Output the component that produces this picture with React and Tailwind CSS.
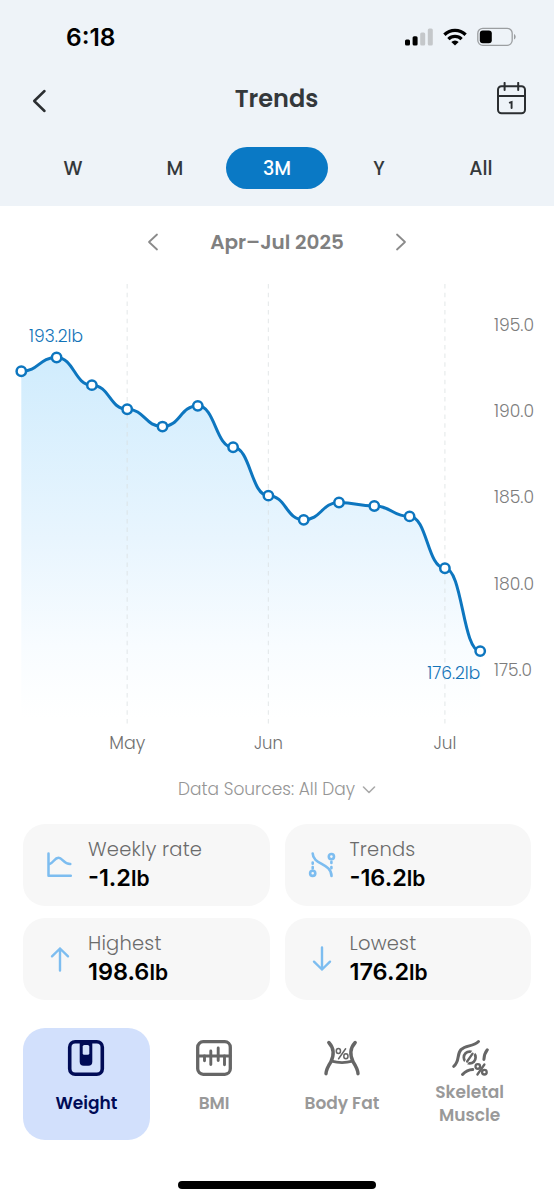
import { useState } from "react";

const RANGES = ["W", "M", "3M", "Y", "All"];

const WEIGHTS = [
  192.4, 193.2, 191.6, 190.2, 189.2, 190.4, 188.0,
  185.2, 183.8, 184.8, 184.6, 184.0, 181.0, 176.2,
];

const MONTHS = [
  { label: "May", index: 3, width: 36 },
  { label: "Jun", index: 7, width: 29 },
  { label: "Jul", index: 12, width: 23 },
];

const TICKS = [195, 190, 185, 180, 175];

const X0 = 21.3;
const STEP = 35.3;
const PX_PER_LB = 17.27;

const px = (i) => X0 + i * STEP;
const py = (lb) => 87.5 + (193.2 - lb) * PX_PER_LB;

function linePath(values) {
  return values.reduce((d, v, i) => {
    if (i === 0) return `M${px(0)} ${py(v)}`;
    const mid = (px(i - 1) + px(i)) / 2;
    return `${d} C${mid} ${py(values[i - 1])} ${mid} ${py(v)} ${px(i)} ${py(v)}`;
  }, "");
}

function StatusBar() {
  return (
    <div className="flex h-[74px] items-center justify-between pl-[66px] pr-[37px]">
      <span className="pt-px font-['Inter',sans-serif] text-[24.5px] font-semibold leading-none text-black">6:18</span>
      <div className="flex items-center">
        <svg width="28" height="18" viewBox="0 0 28 18">
          <rect x="0" y="11.5" width="5" height="6" rx="1.5" fill="#000" />
          <rect x="7.6" y="8.2" width="5" height="9.3" rx="1.5" fill="#000" />
          <rect x="15.2" y="4.5" width="5" height="13" rx="1.5" fill="#c4c7ca" />
          <rect x="22.8" y="0.5" width="5" height="17" rx="1.5" fill="#c4c7ca" />
        </svg>
        <svg className="ml-[10px]" width="24" height="18" viewBox="0 0 24 18">
          <g fill="none" stroke="#000" strokeWidth="3.3">
            <path d="M1.4 6.7a15.2 15.2 0 0 1 21.2 0" />
            <path d="M5.4 11.1a9.4 9.4 0 0 1 13.2 0" />
          </g>
          <path d="M12 17.5l-3.7-3.6a5.3 5.3 0 0 1 7.4 0z" fill="#000" />
        </svg>
        <svg className="ml-[10.5px]" width="40" height="20" viewBox="0 0 40 20">
          <rect x="0.8" y="1.3" width="34.4" height="17" rx="5" fill="none" stroke="#9b9ea1" strokeWidth="1.3" />
          <rect x="2.8" y="3.4" width="12" height="12.8" rx="3" fill="#000" />
          <path d="M37 7v5.6c1-.5 1.7-1.6 1.7-2.8S38 7.5 37 7z" fill="#9b9ea1" />
        </svg>
      </div>
    </div>
  );
}

function Header({ range, onRangeChange }) {
  return (
    <header className="h-[206px] bg-[#eef3f8]">
      <StatusBar />
      <div className="flex h-[49px] items-center justify-between pl-[32px] pr-[27px]">
        <button type="button" className="flex w-[25px] pt-[5px]">
          <svg width="15" height="24" viewBox="0 0 15 24" fill="none" stroke="#2b2e31" strokeWidth="2.5" strokeLinecap="round" strokeLinejoin="round">
            <path d="M12.5 2L2.2 12l10.3 10" />
          </svg>
        </button>
        <h1 className="text-[24px] font-semibold leading-none text-[#34383b]">Trends</h1>
        <button type="button">
          <svg width="31" height="34" viewBox="0 0 31 34" fill="none" stroke="#2b2e31" strokeWidth="2" strokeLinecap="round">
            <rect x="2" y="4.2" width="27" height="27" rx="3.5" />
            <path d="M2 14h27M8.6 0.9v7M22.2 0.9v7" />
            <path d="M13.8 20.6l1.8-.6v6" strokeWidth="1.9" />
          </svg>
        </button>
      </div>
      <nav className="mt-6 grid grid-cols-5 px-[22px]">
        {RANGES.map((r) => (
          <button
            key={r}
            type="button"
            onClick={() => onRangeChange(r)}
            className={`h-[42px] rounded-full text-[19px] font-medium leading-none ${r === range ? "bg-[#0a79c5] text-white" : "text-[#34383b]"}`}
          >
            {r}
          </button>
        ))}
      </nav>
    </header>
  );
}

function PeriodPicker() {
  return (
    <div className="flex h-[72px] items-center justify-center">
      <svg width="12" height="18" viewBox="0 0 12 18" fill="none" stroke="#8a8a8a" strokeWidth="1.8" strokeLinecap="round" strokeLinejoin="round">
        <path d="M10 1.5L2 9l8 7.5" />
      </svg>
      <span className="w-[236px] text-center text-[20px] font-semibold leading-none text-[#808080]">Apr–Jul 2025</span>
      <svg width="12" height="18" viewBox="0 0 12 18" fill="none" stroke="#8a8a8a" strokeWidth="1.8" strokeLinecap="round" strokeLinejoin="round">
        <path d="M2 1.5L10 9l-8 7.5" />
      </svg>
    </div>
  );
}

function WeightChart() {
  const line = linePath(WEIGHTS);
  const last = WEIGHTS.length - 1;

  return (
    <svg className="-mt-2 block" width="554" height="490" viewBox="0 0 554 490">
      <defs>
        <linearGradient id="area" gradientUnits="userSpaceOnUse" x1="0" y1="87" x2="0" y2="448">
          <stop offset="0" stopColor="#d0ecfd" />
          <stop offset="0.5" stopColor="#e8f5fe" />
          <stop offset="0.8" stopColor="#f8fcff" />
          <stop offset="1" stopColor="#ffffff" />
        </linearGradient>
      </defs>

      <path d={`${line} V448 H${X0} Z`} fill="url(#area)" />

      {MONTHS.map((m) => (
        <g key={m.label}>
          <line x1={px(m.index)} x2={px(m.index)} y1="14" y2="454" stroke="#d9dde0" strokeOpacity="0.6" strokeWidth="1.2" strokeDasharray="4.5 4.2" />
          <text x={px(m.index)} y="478.5" textAnchor="middle" textLength={m.width} lengthAdjust="spacingAndGlyphs" fontSize="17" fontWeight="300" fill="#707070">
            {m.label}
          </text>
        </g>
      ))}

      <path d={line} fill="none" stroke="#0d76bf" strokeWidth="3" />
      {WEIGHTS.map((v, i) => (
        <circle key={i} cx={px(i)} cy={py(v)} r="4.7" fill="#fff" stroke="#0d76bf" strokeWidth="2.5" />
      ))}

      <g fontSize="17" fontWeight="300" fill="#1273b8">
        <text x="29" y="72" textLength="54" lengthAdjust="spacingAndGlyphs">193.2lb</text>
        <text x={px(last)} y="409" textAnchor="end" textLength="53" lengthAdjust="spacingAndGlyphs">176.2lb</text>
      </g>

      {TICKS.map((t, i) => (
        <text key={t} x="494" y={60.5 + i * 86.4} textLength={t === 175 ? 38 : 40} lengthAdjust="spacingAndGlyphs" fontSize="17" fontWeight="300" fill="#7c7c7c">
          {t.toFixed(1)}
        </text>
      ))}
    </svg>
  );
}

function RateIcon() {
  return (
    <svg width="28" height="28" viewBox="0 0 28 28" fill="none" stroke="#7dbdf0" strokeWidth="2.5" strokeLinecap="round" strokeLinejoin="round">
      <path d="M2.5 2.5v22.3h22.3" />
      <path d="M3.5 13c4-1 5-6.3 9-6.3s5.3 6.6 11.8 6.4" />
    </svg>
  );
}

function TrendIcon() {
  return (
    <svg width="28" height="28" viewBox="0 0 28 28" fill="none" stroke="#7dbdf0" strokeWidth="2.6" strokeLinecap="round">
      <path d="M4.7 2.5c.2 11.500 18.600 9.500 18.800 22.500" />
      <circle cx="4.7" cy="22.3" r="2.6" />
      <circle cx="23.4" cy="5.6" r="2.6" />
      <path d="M4.7 11.5v1.2M4.7 16v1.5M23.4 10.8v1.2M23.4 16v1.2" />
    </svg>
  );
}

function ArrowIcon({ down }) {
  return (
    <svg className={down ? "rotate-180" : ""} width="28" height="28" viewBox="0 0 28 28" fill="none" stroke="#7dbdf0" strokeWidth="2.4" strokeLinecap="round" strokeLinejoin="round">
      <path d="M14 25.5V3.5M6 11.3l8-7.8 8 7.8" />
    </svg>
  );
}

const STATS = [
  { label: "Weekly rate", value: "-1.2", icon: <RateIcon /> },
  { label: "Trends", value: "-16.2", icon: <TrendIcon /> },
  { label: "Highest", value: "198.6", icon: <ArrowIcon /> },
  { label: "Lowest", value: "176.2", icon: <ArrowIcon down /> },
];

function StatCard({ label, value, icon }) {
  return (
    <div className="flex h-[82px] items-center rounded-[22px] bg-[#f7f7f7] pl-[23px]">
      {icon}
      <div className="ml-[14px]">
        <div className="text-[19.5px] font-light leading-[26px] tracking-[0.2px] text-[#6b6b6b]">{label}</div>
        <div className="mt-px font-['Inter',sans-serif] text-[23.5px] font-semibold leading-[28px] text-black">
          {value}
          <span className="text-[21px]">lb</span>
        </div>
      </div>
    </div>
  );
}

function WeightIcon() {
  return (
    <svg width="38" height="38" viewBox="0 0 38 38">
      <rect x="2.7" y="2.7" width="32.6" height="32.6" rx="5.5" fill="none" stroke="#000b56" strokeWidth="3.6" />
      <path d="M12.7 2.5h12.6v20.3a4 4 0 0 1-4 4h-4.6a4 4 0 0 1-4-4z" fill="#000b56" />
      <rect x="15.7" y="6" width="6.6" height="9.8" rx="1.6" fill="#d2e0fc" />
    </svg>
  );
}

function BmiIcon() {
  return (
    <svg width="38" height="38" viewBox="0 0 38 38" fill="none" stroke="#666" strokeWidth="3.3" strokeLinecap="round">
      <rect x="2.7" y="2.7" width="32.6" height="32.6" rx="5.5" />
      <path d="M3 17h32" strokeWidth="2.8" />
      <path d="M9.5 17v4.7M15.8 12v13.5M23.2 9v12.5M29.5 17v8.7" strokeWidth="2.9" />
    </svg>
  );
}

function BodyFatIcon() {
  return (
    <svg width="38" height="38" viewBox="0 0 38 38" fill="none" stroke="#666" strokeWidth="3.4" strokeLinecap="round">
      <path d="M5.8 3.5c5 5.500 5.500 12.500 2 19.500-2.500 3.800-4.500 7-4.800 11.700" />
      <path d="M32.2 3.5c-5 5.500-5.500 12.500-2 19.500 2.500 3.800 4.500 7 4.800 11.700" />
      <path d="M8.5 22.200c7 1.900 14 1.900 21 0" strokeWidth="2.8" />
      <g strokeWidth="1.5">
        <path d="M22.6 9.800l-7 10" />
        <ellipse cx="15.4" cy="12" rx="2.1" ry="2.5" />
        <ellipse cx="22.9" cy="17.3" rx="2.1" ry="2.5" />
      </g>
    </svg>
  );
}

function MuscleIcon() {
  return (
    <svg width="38" height="38" viewBox="0 0 38 38" fill="none" stroke="#666" strokeWidth="3" strokeLinecap="round">
      <path d="M2.7 27.300c6.300-5 2.800-12 7.300-16.700C15 5.700 22 8 27.500 2.500" />
      <path d="M36.3 10.800c-2 2.500-3.200 5.500-3.400 9.700" />
      <path d="M11.5 35.500c3-3.200 6-4.900 10.200-5" />
      {/* muscle fibre bundle, split along its diagonal */}
      <circle cx="18.7" cy="18.5" r="5.9" strokeWidth="2.7" />
      <path d="M23.6 11.5l-9.8 14" stroke="#fff" strokeWidth="3.8" strokeLinecap="butt" />
      <path d="M21.6 14.700l-5.500 7.800" strokeWidth="2.3" />
      <g strokeWidth="2.3">
        <path d="M33.4 25.500l-7 10" />
        <circle cx="26.8" cy="27.500" r="2.3" />
        <circle cx="33.4" cy="33.2" r="2.3" />
      </g>
    </svg>
  );
}

const METRICS = [
  { label: "Weight", icon: <WeightIcon /> },
  { label: "BMI", icon: <BmiIcon /> },
  { label: "Body Fat", icon: <BodyFatIcon /> },
  { label: "Skeletal Muscle", icon: <MuscleIcon />, wrap: true },
];

export default function App() {
  const [range, setRange] = useState("3M");
  const [metric, setMetric] = useState("Weight");

  return (
    <div className="flex h-[1200px] w-[554px] flex-col overflow-hidden bg-white font-['Poppins','Inter',sans-serif]">
      <Header range={range} onRangeChange={setRange} />
      <PeriodPicker />
      <WeightChart />

      <button type="button" className="flex h-[58px] items-center justify-center gap-[7px] pt-[2px] text-[17px] font-light text-[#959595]">
        <span>Data Sources: All Day</span>
        <svg width="14" height="9" viewBox="0 0 14 9" fill="none" stroke="#aaa" strokeWidth="1.6" strokeLinecap="round" strokeLinejoin="round">
          <path d="M1.5 1L7 6.5 12.5 1" />
        </svg>
      </button>

      <section className="mt-[6px] grid grid-cols-2 gap-x-[15px] gap-y-3 px-[23px]">
        {STATS.map((s) => (
          <StatCard key={s.label} {...s} />
        ))}
      </section>

      <nav className="mt-[28px] grid grid-cols-4 pl-[22.5px] pr-[20.5px]">
        {METRICS.map((m) => (
          <button
            key={m.label}
            type="button"
            onClick={() => setMetric(m.label)}
            className={`flex h-[112px] flex-col items-center rounded-[22px] pt-[11px] text-[17px] font-semibold leading-[23px] ${m.label === metric ? "bg-[#d2e0fc] text-[#000b56]" : "text-[#999]"}`}
          >
            {m.icon}
            <span className={m.wrap ? "mt-[4px] w-[80px]" : "mt-[15px]"}>{m.label}</span>
          </button>
        ))}
      </nav>

      <div className="mx-auto mt-[41px] h-[8px] w-[198px] shrink-0 rounded-full bg-black" />
    </div>
  );
}
